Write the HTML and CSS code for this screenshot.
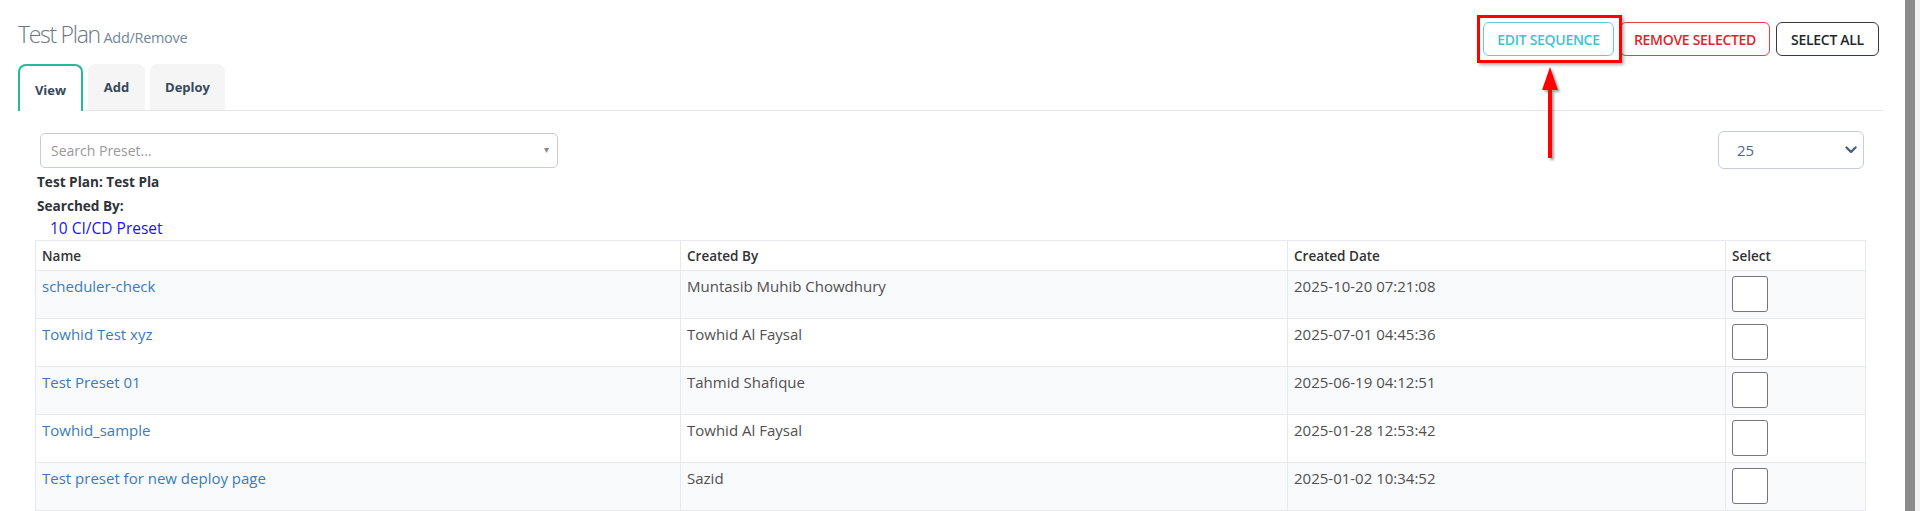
FILE: index.html
```html
<!DOCTYPE html>
<html lang="en">
<head>
<meta charset="utf-8">
<title>Test Plan Add/Remove</title>
<link rel="stylesheet" href="styles.css">
</head>
<body>
<div class="page">
  <div class="header">
    <h2 class="title">Test Plan <small>Add/Remove</small></h2>
    <div class="actions">
      <button class="btn btn-info">EDIT SEQUENCE</button>
      <button class="btn btn-danger">REMOVE SELECTED</button>
      <button class="btn btn-dark">SELECT ALL</button>
    </div>
  </div>
  <ul class="tabs">
    <li class="tab active">View</li>
    <li class="tab">Add</li>
    <li class="tab">Deploy</li>
  </ul>
  <div class="content">
    <div class="filters">
      <div class="search">
        <span class="placeholder">Search Preset...</span>
        <span class="caret">&#9662;</span>
      </div>
      <div class="per-page">
        <span class="per-value">25</span>
        <svg class="chev" width="12" height="8" viewBox="0 0 12 8"><path d="M1.5 1.5 L6 6 L10.5 1.5" fill="none" stroke="#44607e" stroke-width="2.4" stroke-linecap="round" stroke-linejoin="round"/></svg>
      </div>
    </div>
    <div class="label">Test Plan: Test Pla</div>
    <div class="label">Searched By:</div>
    <div class="preset-count">10 CI/CD Preset</div>
    <table class="grid">
      <colgroup>
        <col class="c-name"><col class="c-by"><col class="c-date"><col class="c-sel">
      </colgroup>
      <thead>
        <tr><th>Name</th><th>Created By</th><th>Created Date</th><th>Select</th></tr>
      </thead>
      <tbody>
        <tr><td><a class="link">scheduler-check</a></td><td>Muntasib Muhib Chowdhury</td><td>2025-10-20 07:21:08</td><td><span class="check"></span></td></tr>
        <tr><td><a class="link">Towhid Test xyz</a></td><td>Towhid Al Faysal</td><td>2025-07-01 04:45:36</td><td><span class="check"></span></td></tr>
        <tr><td><a class="link">Test Preset 01</a></td><td>Tahmid Shafique</td><td>2025-06-19 04:12:51</td><td><span class="check"></span></td></tr>
        <tr><td><a class="link">Towhid_sample</a></td><td>Towhid Al Faysal</td><td>2025-01-28 12:53:42</td><td><span class="check"></span></td></tr>
        <tr><td><a class="link">Test preset for new deploy page</a></td><td>Sazid</td><td>2025-01-02 10:34:52</td><td><span class="check"></span></td></tr>
      </tbody>
    </table>
  </div>

  <div class="highlight"></div>
  <svg class="arrow" width="30" height="110" viewBox="0 0 30 110">
    <defs>
      <filter id="sh" x="-50%" y="-20%" width="200%" height="140%">
        <feDropShadow dx="2" dy="2" stdDeviation="1.2" flood-color="#000" flood-opacity="0.35"/>
      </filter>
    </defs>
    <g filter="url(#sh)">
      <polygon points="10,2 2,25 18,25" fill="#f00"/>
      <rect x="8" y="22" width="4" height="71" fill="#f00"/>
    </g>
  </svg>
</div>
<div class="scrollbar"><div class="thumb"></div></div>
</body>
</html>
```
FILE: styles.css
```css
html, body {
  margin: 0;
  padding: 0;
  background: #fff;
  overflow: hidden;
  height: 511px;
}
body {
  font-family: "Open Sans", "DejaVu Sans", sans-serif;
  color: #555;
}
.page {
  position: relative;
  width: 1905px;
  box-sizing: border-box;
  padding: 0 22px 0 18px;
}
.header {
  display: flex;
  justify-content: space-between;
  align-items: flex-start;
  height: 56px;
}
.title {
  margin: 19px 0 0;
  font-size: 23px;
  line-height: 30px;
  font-weight: 300;
  color: #6b7682;
  letter-spacing: -1.3px;
}
.title small {
  font-size: 14.5px;
  font-weight: 400;
  color: #73879c;
  letter-spacing: -0.3px;
  margin-left: -1px;
}
.actions {
  display: flex;
  gap: 6px;
  margin-top: 22px;
  margin-right: 4px;
}
.btn {
  height: 34px;
  padding: 0 6px;
  background: #fff;
  border: 1px solid;
  border-radius: 6px;
  font-family: "Open Sans", sans-serif;
  font-size: 14px;
  font-weight: 600;
  letter-spacing: -0.3px;
}
.btn-info { color: #3ec3d3; border-color: #5ccfdc; width: 131px; }
.btn-danger { color: #e41f2b; border-color: #ee3a42; width: 150px; }
.btn-dark { color: #23272d; border-color: #343a40; width: 103px; }

.tabs {
  list-style: none;
  display: flex;
  gap: 5px;
  margin: 8px 0 0;
  padding: 0;
  border-bottom: 1px solid #e6e6e6;
  height: 46px;
}
.tab {
  display: flex;
  align-items: center;
  justify-content: center;
  height: 46px;
  box-sizing: border-box;
  background: #f5f5f5;
  border-radius: 8px 8px 0 0;
  font-size: 13px;
  font-weight: 700;
  color: #34495e;
  padding-bottom: 1px;
}
.tab:nth-child(1) { width: 65px; }
.tab:nth-child(2) { width: 57px; }
.tab:nth-child(3) { width: 75px; }
.tab.active {
  background: #fff;
  border: 2px solid #26b99a;
  border-bottom: none;
  height: 47px;
  padding-top: 4px;
}

.content {
  padding: 0 18px 0 17px;
}
.filters {
  display: flex;
  justify-content: space-between;
  align-items: center;
  margin-top: 20px;
  padding: 0 1px 0 5px;
}
.search {
  width: 518px;
  height: 35px;
  box-sizing: border-box;
  border: 1px solid #c6ccd6;
  border-radius: 5px;
  display: flex;
  align-items: center;
  justify-content: space-between;
  padding: 0 8px 0 10px;
}
.placeholder {
  font-size: 14px;
  color: #999;
}
.caret {
  font-size: 10px;
  color: #888;
  margin-top: -2px;
}
.per-page {
  width: 146px;
  height: 38px;
  box-sizing: border-box;
  border: 1px solid #c5cdd9;
  border-radius: 6px;
  display: flex;
  align-items: center;
  justify-content: space-between;
  padding: 0 6px 0 18px;
}
.per-value {
  font-size: 15px;
  color: #4f6a88;
}
.label {
  margin: 4px 0 0 2px;
  font-size: 13.6px;
  line-height: 18px;
  font-weight: 700;
  color: #2f3438;
}
.label + .label { margin-top: 6px; }
.preset-count {
  margin: 3px 0 0 15px;
  font-size: 15.5px;
  line-height: 20px;
  color: #1a14f0;
}
.grid {
  width: 1830px;
  border-collapse: collapse;
  margin-top: 2px;
  font-size: 15px;
  table-layout: fixed;
}
.c-name { width: 645px; }
.c-by { width: 607px; }
.c-date { width: 438px; }
.c-sel { width: 140px; }
.grid th, .grid td {
  border: 1px solid #e6e9ed;
  text-align: left;
  padding: 0 6px;
}
.grid th {
  height: 29px;
  font-size: 13.5px;
  font-weight: 600;
  color: #333;
  vertical-align: middle;
}
.grid td {
  height: 48px;
  box-sizing: border-box;
  vertical-align: top;
  padding-top: 5px;
  padding-bottom: 5px;
  line-height: 21px;
  color: #505050;
}
.grid tbody tr:nth-child(odd) td { background: #f9fafc; }
.link { color: #3b7bbb; text-decoration: none; }
.check {
  display: block;
  width: 36px;
  height: 36px;
  box-sizing: border-box;
  border: 1px solid #767676;
  border-radius: 3px;
  background: #fff;
}

.highlight {
  position: absolute;
  left: 1477px;
  top: 15px;
  width: 145px;
  height: 48px;
  box-sizing: border-box;
  border: 3px solid #f00;
  box-shadow: 2px 2px 3px rgba(0,0,0,0.3);
  pointer-events: none;
}
.arrow {
  position: absolute;
  left: 1540px;
  top: 65px;
}
.scrollbar {
  position: fixed;
  right: 0;
  top: 0;
  width: 15px;
  height: 100%;
  background: #f1f1f1;
}
.thumb {
  width: 10px;
  height: 100%;
  background: #8b8b8b;
}
```
